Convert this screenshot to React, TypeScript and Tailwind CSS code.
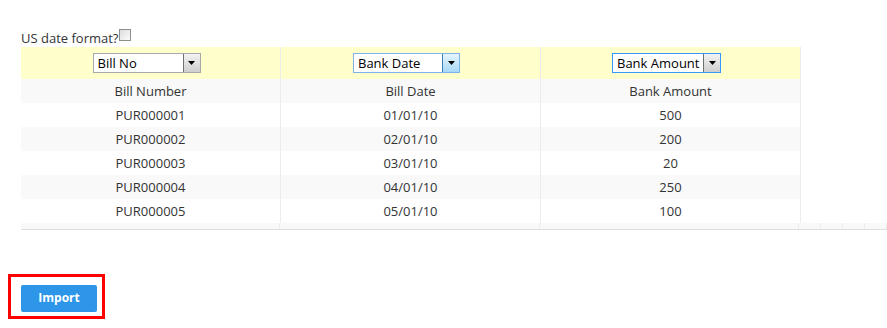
import React from "react";

const rows = [
  { no: "PUR000001", date: "01/01/10", amt: "500" },
  { no: "PUR000002", date: "02/01/10", amt: "200" },
  { no: "PUR000003", date: "03/01/10", amt: "20" },
  { no: "PUR000004", date: "04/01/10", amt: "250" },
  { no: "PUR000005", date: "05/01/10", amt: "100" },
];

function Arrow({ blue }: { blue?: boolean }) {
  return (
    <div
      className={`w-[17px] h-full flex items-center justify-center border-l ${
        blue
          ? "border-[#3c7fb1] bg-gradient-to-b from-[#e5f4fc] to-[#a8d8f6]"
          : "border-[#707070] bg-gradient-to-b from-[#f2f2f2] to-[#cfcfcf]"
      }`}
    >
      <svg width="7" height="4" viewBox="0 0 7 4">
        <path d="M0 0H7L3.5 4Z" fill="#000" />
      </svg>
    </div>
  );
}

function Select({ label, w, blue, focus }: { label: string; w: string; blue?: boolean; focus?: boolean }) {
  return (
    <div
      className={`${w} h-[20px] flex items-stretch bg-white border ${
        focus ? "border-[#3399ff]" : blue ? "border-[#7eb4ea]" : "border-[#a9a9a9]"
      }`}
    >
      <div className="flex-1 pl-[4px] text-[13px] leading-[18px] text-black whitespace-nowrap overflow-hidden">{label}</div>
      <Arrow blue={blue} />
    </div>
  );
}

export default function App() {
  return (
    <div className="w-[887px] h-[328px] bg-white overflow-hidden text-[#333] pt-[29px]" style={{ fontFamily: "'Open Sans', sans-serif" }}>
      <div className="flex items-start ml-[21px] h-[18px]">
        <span className="text-[13px] leading-[18px]">US date format?</span>
        <div className="w-[12px] h-[12px] border border-[#8f8f8f] bg-gradient-to-br from-[#dcdcdc] to-[#fbfbfb] ml-[1px]" />
      </div>

      <div className="ml-[21px] border-b border-[#dedede]">
        <div className="flex h-[32px] w-[780px] bg-[#ffffcc]">
          <div className="w-[260px] border-r border-[#ececec] flex items-center justify-center pr-[8px]">
            <Select label="Bill No" w="w-[108px]" />
          </div>
          <div className="w-[260px] border-r border-[#ececec] flex items-center justify-center pr-[8px]">
            <Select label="Bank Date" w="w-[107px]" blue />
          </div>
          <div className="w-[260px] border-r border-[#ececec] flex items-center justify-center pr-[8px]">
            <Select label="Bank Amount" w="w-[109px]" focus />
          </div>
        </div>
        <div className="flex h-[24px] w-[780px] bg-[#f9f9f9] text-[13px] leading-[24px] text-center">
          <div className="w-[260px] border-r border-[#ececec]">Bill Number</div>
          <div className="w-[260px] border-r border-[#ececec]">Bill Date</div>
          <div className="w-[260px] border-r border-[#ececec]">Bank Amount</div>
        </div>
        {rows.map((r, i) => (
          <div key={r.no} className={`flex h-[24px] w-[780px] text-[13px] leading-[24px] text-center ${i % 2 ? "bg-[#f9f9f9]" : "bg-white"}`}>
            <div className="w-[260px] border-r border-[#ececec]">{r.no}</div>
            <div className="w-[260px] border-r border-[#ececec]">{r.date}</div>
            <div className="w-[260px] border-r border-[#ececec]">{r.amt}</div>
          </div>
        ))}
        <div className="flex h-[6px] bg-[#f9f9f9]">
          <div className="w-[260px] border-r border-[#ececec]" />
          <div className="w-[260px] border-r border-[#ececec]" />
          <div className="w-[260px] border-r border-[#ececec]" />
          <div className="w-[22px] border-r border-[#ececec]" />
          <div className="w-[22px] border-r border-[#ececec]" />
          <div className="w-[22px] border-r border-[#ececec]" />
          <div className="w-[22px] border-r border-[#ececec]" />
        </div>
      </div>

      <div className="ml-[8px] mt-[44px] w-[97px] border-[3px] border-[#ff0000] pl-[10px] pt-[7px] pr-[5px] pb-[4px]">
        <button className="w-[76px] h-[27px] bg-[#2d96e8] rounded-[2px] text-white text-[12px] font-bold">Import</button>
      </div>
    </div>
  );
}
